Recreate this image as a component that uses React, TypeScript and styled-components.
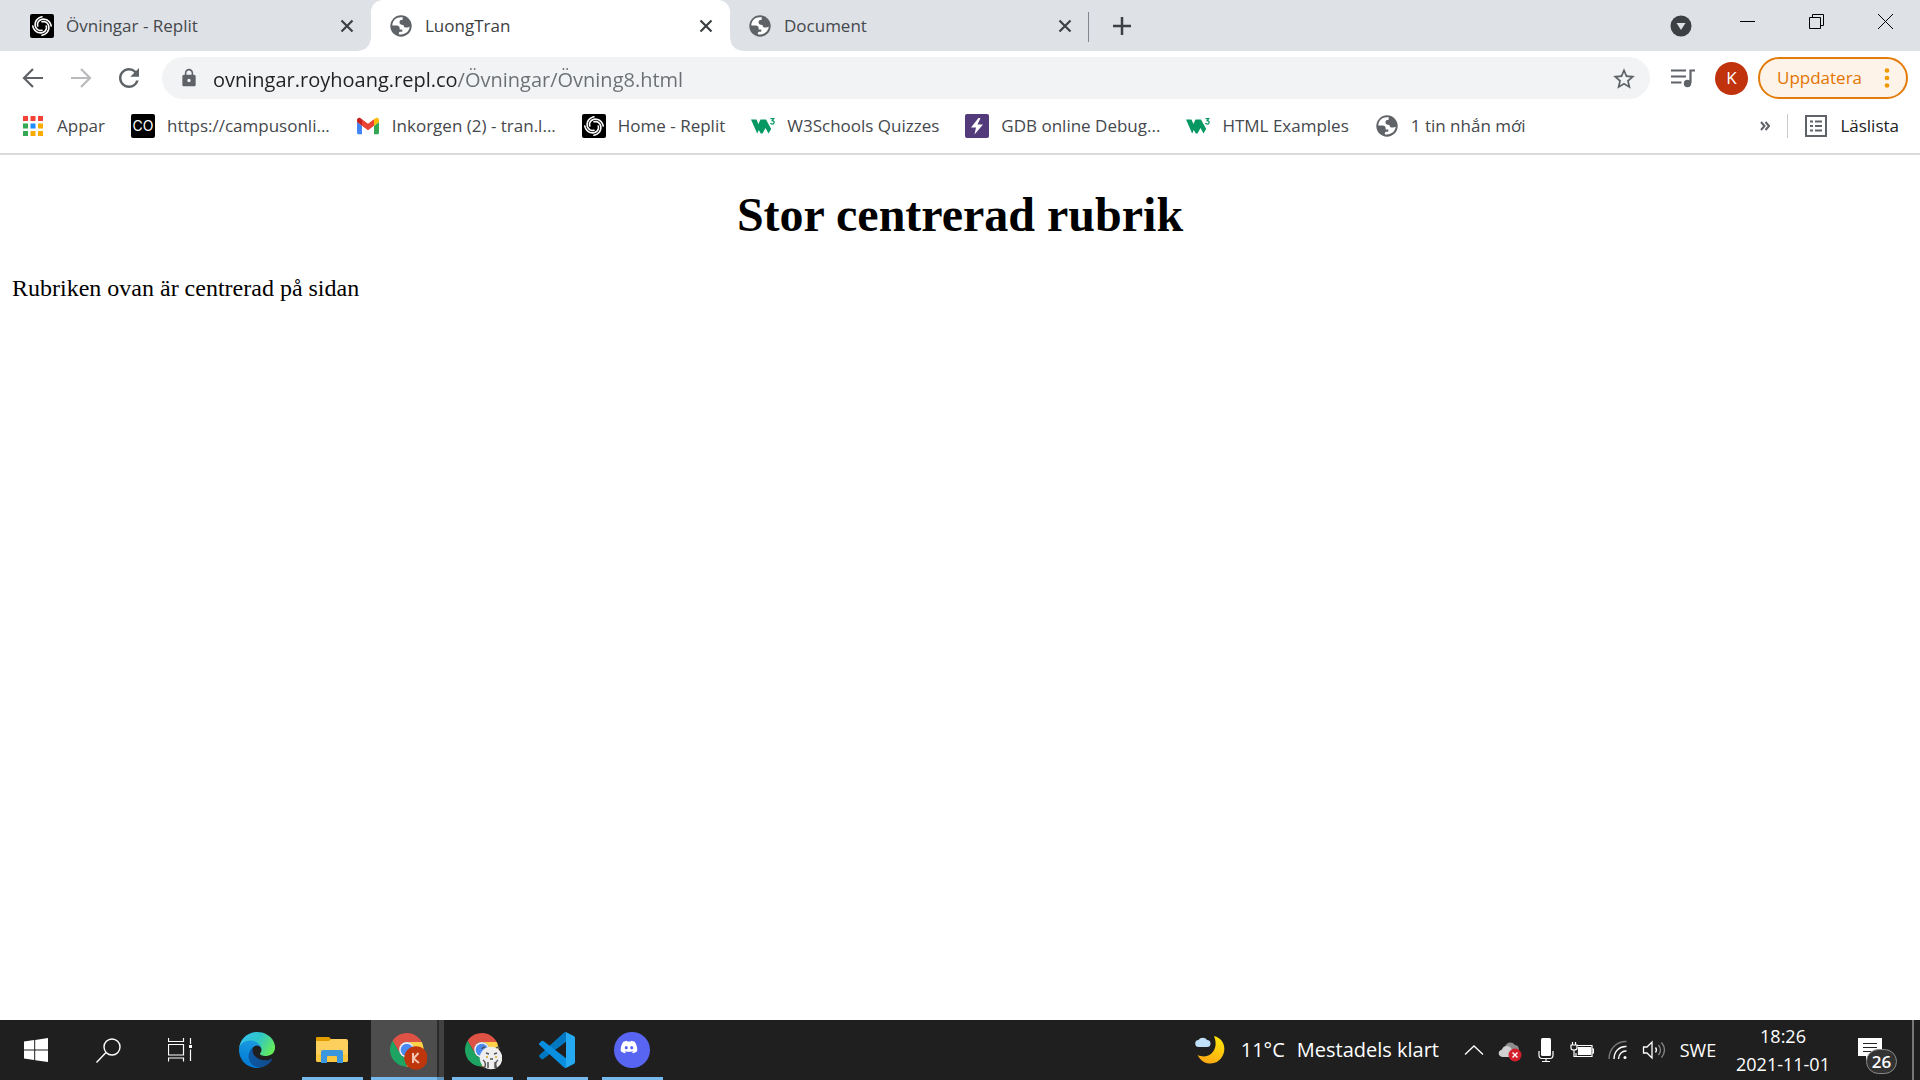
import React from "react";
import styled, { createGlobalStyle, css } from "styled-components";
import { FaDiscord } from "react-icons/fa";
import { MdLock, MdStarOutline, MdRefresh } from "react-icons/md";

const uiFont = `"Segoe UI", "Open Sans", "Noto Sans", sans-serif`;

const GlobalStyle = createGlobalStyle`
  *, *::before, *::after { box-sizing: border-box; }
  body { margin: 0; background: #fff; }
  button { margin: 0; padding: 0; border: 0; background: none; color: inherit; font: inherit; cursor: pointer; }
  svg { display: block; flex: none; }
`;

const Screen = styled.div`
  display: flex;
  flex-direction: column;
  min-height: 100vh;
  font-family: ${uiFont};
  font-size: 17px;
  line-height: 24px;
`;

/* ---------- Tab strip ---------- */

const TabStrip = styled.div`
  display: flex;
  align-items: flex-start;
  height: 51px;
  padding-left: 12px;
  background: #dee1e6;
`;

const TabList = styled.div`
  display: flex;
  flex: 0 1 1077px;
  min-width: 0;
`;

const Tab = styled.div<{ $active?: boolean; $divided?: boolean }>`
  position: relative;
  display: flex;
  flex: 1 1 0;
  align-items: center;
  gap: 12px;
  min-width: 0;
  height: 51px;
  padding: 0 12px 0 18px;
  color: #45484c;
  ${(p) =>
    p.$active &&
    css`
      background: #fff;
      border-radius: 12px 12px 0 0;
      color: #3c4043;
      &::before,
      &::after {
        content: "";
        position: absolute;
        bottom: 0;
        width: 12px;
        height: 12px;
      }
      &::before {
        right: 100%;
        background: radial-gradient(circle at 0 0, transparent 11px, #fff 12px);
      }
      &::after {
        left: 100%;
        background: radial-gradient(circle at 100% 0, transparent 11px, #fff 12px);
      }
    `}
  ${(p) =>
    p.$divided &&
    css`
      &::after {
        content: "";
        position: absolute;
        right: 0;
        top: 12px;
        width: 1px;
        height: 30px;
        background: #80868b;
      }
    `}
`;

const TabTitle = styled.span`
  flex: 1;
  min-width: 0;
  overflow: hidden;
  white-space: nowrap;
`;

const SquareButton = styled.button`
  display: grid;
  place-items: center;
  flex: none;
  width: 24px;
  height: 24px;
  color: #3c4043;
`;

const NewTabButton = styled(SquareButton)`
  width: 66px;
  height: 51px;
`;

const TabSearchButton = styled(SquareButton)`
  height: 51px;
  margin: 0 20px 0 auto;
`;

const WindowButton = styled(SquareButton)`
  width: 69px;
  height: 43px;
  color: #000;
`;

/* ---------- Toolbar ---------- */

const Toolbar = styled.div`
  display: flex;
  align-items: center;
  height: 54px;
  padding: 0 12px 0 9px;
`;

const NavButton = styled(SquareButton)<{ $off?: boolean }>`
  width: 48px;
  height: 42px;
  color: ${(p) => (p.$off ? "#bababd" : "#5f6368")};
`;

const Omnibox = styled.label`
  display: flex;
  flex: 1;
  align-items: center;
  min-width: 0;
  height: 42px;
  margin: 0 9px;
  padding: 0 15px 0 17px;
  border-radius: 21px;
  background: #f1f3f4;
  color: #5f6368;
`;

/* The host is darker than the path that follows it. */
const UrlInput = styled.input`
  flex: 1;
  min-width: 0;
  height: 32px;
  margin-left: 14px;
  padding: 2px 0 0;
  border: 0;
  outline: 0;
  font-family: ${uiFont};
  font-size: 20px;
  line-height: 30px;
  color: #202124;
  background: linear-gradient(90deg, #202124 244px, #6b6f73 244px);
  background-clip: text;
  -webkit-background-clip: text;
  -webkit-text-fill-color: transparent;
`;

const Avatar = styled.button`
  flex: none;
  width: 33px;
  height: 33px;
  margin: 0 10px 0 8px;
  border-radius: 50%;
  background: #c0330c;
  color: #fff;
  font-size: 17px;
  text-align: center;
`;

const UpdateButton = styled.button`
  display: flex;
  align-items: center;
  justify-content: space-between;
  flex: none;
  width: 150px;
  height: 42px;
  padding: 0 16px 0 17px;
  border: 2px solid #e37c0a;
  border-radius: 21px;
  background: #fdf3e9;
  color: #e37400;
`;

/* ---------- Bookmarks ---------- */

const BookmarksBar = styled.nav`
  display: flex;
  align-items: center;
  height: 50px;
  padding: 0 21px 6px 21px;
  border-bottom: 2px solid #dadadc;
  color: #45484c;
`;

const BookmarkList = styled.div`
  display: flex;
  flex: 1;
  gap: 26px;
  min-width: 0;
  overflow: hidden;
`;

const Bookmark = styled.a`
  display: flex;
  align-items: center;
  flex: none;
  gap: 12px;
  height: 30px;
  color: inherit;
  text-decoration: none;
  white-space: nowrap;
`;

const MoreButton = styled(SquareButton)`
  margin-right: 10px;
  color: #5f6368;
`;

const ReadingList = styled.button`
  display: flex;
  align-items: center;
  gap: 12px;
  height: 24px;
  padding-left: 16px;
  border-left: 1px solid #c8cacd;
  color: #202124;
`;

const IconTile = styled.span<{ $bg: string }>`
  display: grid;
  place-items: center;
  flex: none;
  width: 24px;
  height: 24px;
  border-radius: 2px;
  background: ${(p) => p.$bg};
  color: #fff;
  font-family: Inter, sans-serif;
  font-size: 14px;
`;

/* ---------- Web page ---------- */

const Page = styled.main`
  flex: 1;
  padding: 0 12px;
  font-family: "Times New Roman", "Liberation Serif", serif;
  color: #000;
`;

const Heading = styled.h1`
  margin: 32px 0;
  font-size: 48px;
  line-height: 56px;
  text-align: center;
`;

const Paragraph = styled.p`
  margin: 0;
  font-size: 24px;
  line-height: 26px;
`;

/* ---------- Taskbar ---------- */

const Taskbar = styled.footer`
  display: flex;
  height: 60px;
  background: #1f1f1f;
  color: #fff;
  font-size: 18px;
`;

const SystemButton = styled(SquareButton)`
  width: 72px;
  height: 60px;
  color: #fff;
`;

const Apps = styled.div`
  display: flex;
  margin: 0 auto 0 3px;
`;

const AppButton = styled.button<{ $state?: "running" | "active" }>`
  display: grid;
  place-items: center;
  width: 75px;
  height: 60px;
  ${(p) =>
    p.$state === "running" &&
    css`
      background: linear-gradient(#76b9ed, #76b9ed) 8px bottom / 61px 3px no-repeat;
    `}
  ${(p) =>
    p.$state === "active" &&
    css`
      background:
        linear-gradient(90deg, #76b9ed 66px, #5f93bc 66px) 2px bottom / 73px 3px no-repeat,
        linear-gradient(90deg, #4d4d4d 66px, #2b2b2b 66px, #2b2b2b 68px, #414141 68px) 2px 0 / 73px 60px no-repeat;
    `}
`;

const Weather = styled.button`
  display: flex;
  align-items: center;
  margin-right: 17px;
  font-size: 20px;
  white-space: nowrap;
`;

const Temperature = styled.span`
  margin: 0 12px 0 16px;
`;

const TrayButton = styled(SquareButton)<{ $width?: number }>`
  width: ${(p) => p.$width ?? 36}px;
  height: 60px;
  color: #fff;
`;

const Clock = styled(TrayButton)`
  display: block;
  line-height: 28px;
  text-align: center;
`;

const ClockLine = styled.time`
  display: block;
`;

const Notifications = styled(TrayButton)`
  position: relative;
`;

const Count = styled.span`
  position: absolute;
  left: 24px;
  top: 29px;
  width: 31px;
  height: 25px;
  border: 1px solid #8a8a8a;
  border-radius: 13px;
  background: #333;
  font-size: 17px;
  font-weight: 600;
  line-height: 23px;
`;

const ShowDesktop = styled.button`
  width: 8px;
  height: 60px;
  border-left: 2px solid #777;
`;

/* ---------- Drawings ---------- */

const Globe = () => (
  <svg width="24" height="24" viewBox="0 0 24 24" fill="none">
    <circle cx="12" cy="12" r="10.7" fill="#5f6368" />
    <path
      d="M14 3.600C8.500 2.200 3.400 6 3.300 11.600h4.400c1.800 0 3 1.200 3 2.800v1.200h2.600v2.200h-1.600c-1.300 0-1.900.6-1.900 1.500v1c5.600 1.200 10.700-2.600 10.900-7.700-.8.8-1.900 1-3.300 1-1.900 0-2.900-1.100-2.900-2.700-2.400.1-4-.7-4-2.600 0-1.800 1.200-2.400 3.100-2.500 0-1 .2-1.600.4-2.200z"
      fill="#fff"
    />
  </svg>
);

/* One arm of the swirl, from the hub out to the rim over half a turn. */
const swirlArm = (start: number) =>
  Array.from({ length: 19 }, (_, i) => {
    const t = i / 18;
    const angle = ((start + t * 180) * Math.PI) / 180;
    const r = 4.2 + t * 5;
    return `${i ? "L" : "M"}${(12 + r * Math.cos(angle)).toFixed(2)} ${(12 + r * Math.sin(angle)).toFixed(2)}`;
  }).join("");

const Replit = () => (
  <IconTile $bg="#000">
    <svg width="24" height="24" viewBox="0 0 24 24" fill="none" stroke="#fff" strokeWidth="1.600" strokeLinecap="round">
      {[0, 90, 180, 270].map((a) => (
        <path key={a} d={swirlArm(a)} />
      ))}
    </svg>
  </IconTile>
);

const W3 = () => (
  <svg width="24" height="24" viewBox="0 0 24 24">
    <path d="M0 5.500h5.500l1.900 4.500 2.100-4.500H15l5.200 9.500-2.700 4.500-3-5.500-3 5.500h-1.700l-2-3.600-1.600 3.600z" fill="#059862" />
    <path d="M19.500 4.600h3.300l-1.700 2.100c3 0 2.400 3.400.2 3.400-.9 0-1.600-.4-1.900-1" fill="none" stroke="#059862" strokeWidth="1.200" />
  </svg>
);

const Gmail = () => (
  <svg width="24" height="24" viewBox="48 38 96 74">
    <path fill="#4285f4" d="M58 108h14V74L52 59v43c0 3.320 2.690 6 6 6" />
    <path fill="#34a853" d="M120 108h14c3.320 0 6-2.690 6-6V59l-20 15" />
    <path fill="#fbbc04" d="M120 48v26l20-15v-8c0-7.420-8.470-11.650-14.400-7.200" />
    <path fill="#ea4335" d="M72 74V48l24 18 24-18v26L96 92" />
    <path fill="#c5221f" d="M52 51v8l20 15V48l-5.600-4.200c-5.940-4.450-14.400-.22-14.400 7.200" />
  </svg>
);

const AppsGrid = () => {
  const colors = ["#f44336", "#f44336", "#f44336", "#34a853", "#1a8cff", "#f9ab00", "#34a853", "#f9ab00", "#f9ab00"];
  return (
    <svg width="24" height="24" viewBox="0 0 24 24">
      {colors.map((c, i) => (
        <rect key={i} x={2 + (i % 3) * 7.5} y={2 + Math.floor(i / 3) * 7.5} width="5" height="5" fill={c} />
      ))}
    </svg>
  );
};

const Cross = () => (
  <svg width="14" height="14" viewBox="0 0 14 14" stroke="currentColor" strokeWidth="2.200">
    <path d="M1.500 1.500l11 11M12.500 1.500l-11 11" />
  </svg>
);

const Arrow = ({ flip }: { flip?: boolean }) => (
  <svg width="22" height="22" viewBox="0 0 22 22" fill="none" stroke="currentColor" strokeWidth="2.200">
    <path d={flip ? "M1 11h19M11 2l9 9-9 9" : "M21 11H2M11 2l-9 9 9 9"} />
  </svg>
);

const MediaList = () => (
  <svg width="24" height="20" viewBox="0 0 24 20" fill="none" stroke="currentColor" strokeWidth="2.200">
    <path d="M0 2.500h15M0 8.500h15M0 14.500h10.500" />
    <path d="M24 2.500h-4.500V15" />
    <circle cx="16.500" cy="15.500" r="3.700" fill="currentColor" stroke="none" />
  </svg>
);

const Chrome = ({ children }: { children: React.ReactNode }) => (
  <svg width="40" height="40" viewBox="0 0 40 40">
    <g transform="translate(3 3) scale(.7)">
      <path fill="#de5246" d="M3.810 11.030A24 24 0 0 1 45.330 13L24 13A11 11 0 0 0 14.470 29.500z" />
      <path fill="#fdd248" d="M45.330 13A24 24 0 0 1 22.860 47.970L33.530 29.500A11 11 0 0 0 24 13z" />
      <path fill="#1da462" d="M22.860 47.970A24 24 0 0 1 3.810 11.030L14.470 29.500A11 11 0 0 0 33.530 29.500z" />
      <circle cx="24" cy="24" r="11" fill="#f1f1f1" />
      <circle cx="24" cy="24" r="8.800" fill="#4a8af4" />
    </g>
    {children}
  </svg>
);

const Edge = () => (
  <svg width="36" height="36" viewBox="0 0 256 256">
    <defs>
      <linearGradient id="edgeDark" x1="0" x2="1">
        <stop offset="0" stopColor="#0c59a4" />
        <stop offset="1" stopColor="#114a8b" />
      </linearGradient>
      <linearGradient id="edgeMid" x1=".6" y1="0" x2=".3" y2="1">
        <stop offset="0" stopColor="#1b9de2" />
        <stop offset="1" stopColor="#0078d4" />
      </linearGradient>
      <linearGradient id="edgeTop" x1="0" y1=".2" x2="1" y2=".6">
        <stop offset="0" stopColor="#35c1f1" />
        <stop offset=".5" stopColor="#2fc6c9" />
        <stop offset="1" stopColor="#66eb5a" />
      </linearGradient>
    </defs>
    <path
      fill="url(#edgeDark)"
      d="M231.100 190.500c-3.400 1.800-6.900 3.400-10.500 4.700a101.700 101.700 0 0 1-35.900 6.500c-47.300 0-88.500-32.500-88.500-74.300.1-11.400 6.400-21.900 16.400-27.300-42.800 1.800-53.800 46.400-53.800 72.500 0 73.900 68.100 81.400 82.800 81.400 7.900 0 19.800-2.300 27-4.600l1.300-.4a128.300 128.300 0 0 0 66.600-52.800c1.200-1.900.6-4.300-1.200-5.500-1.300-.8-2.900-.9-4.200-.2z"
    />
    <path
      fill="url(#edgeMid)"
      d="M105.700 241.400c-8.900-5.500-16.600-12.800-22.700-21.300a81.400 81.400 0 0 1 29.500-120.100c3.100-1.500 8.500-4.100 15.600-4a32.400 32.400 0 0 1 25.700 13 31.900 31.900 0 0 1 6.300 18.700c0-.2 24.500-79.600-80-79.600-43.900 0-80 41.700-80 78.200-.2 19.300 4 38.500 12.100 56a128 128 0 0 0 156.400 67.100 75.500 75.500 0 0 1-62.800-8z"
    />
    <path
      fill="url(#edgeTop)"
      d="M152.300 148.900c-.9 1-3.400 2.500-3.400 5.600 0 2.600 1.700 5.200 4.800 7.300 14.400 10.100 41.700 8.700 41.800 8.700a59.600 59.600 0 0 0 30.300-8.300 61.400 61.400 0 0 0 30.400-52.900c.3-22.400-8-37.300-11.300-43.900C223.500 23.900 177.700 0 128 0 58 0 1 56.200 0 126.200c.5-36.500 36.800-66 80-66 3.500 0 23.500.3 42 10.100 16.300 8.600 24.900 18.900 30.800 29.200 6.200 10.700 7.300 24.100 7.300 29.500s-2.700 13.300-7.800 19.900z"
    />
  </svg>
);

const Folder = () => (
  <svg width="34" height="30" viewBox="0 0 34 30">
    <path d="M1 3q0-1 1-1h12l2 2-2 4H1z" fill="#e19c00" />
    <path d="M1 6h13l2-2h15q2 0 2 2v19q0 2-2 2H3q-2 0-2-2z" fill="#fdd05e" />
    <path d="M1 19h32v6q0 2-2 2H3q-2 0-2-2z" fill="#f9c840" />
    <path d="M6 28V17q0-2 2-2h18q2 0 2 2v11h-6v-6q0-1-1-1h-8q-1 0-1 1v6z" fill="#3a96dd" />
  </svg>
);

const VsCode = () => (
  <svg width="36" height="36" viewBox="0 0 100 100">
    <path fill="#0078c1" d="M75 27.300L12.190 74.990a4.160 4.160 0 0 1-5.320-.24l-5.500-5.010a4.170 4.170 0 0 1 0-6.160L68.760 2.100 75 1z" />
    <path fill="#0a8fe0" d="M75 72.700L12.190 25.010a4.160 4.160 0 0 0-5.320.24l-5.500 5.010a4.170 4.170 0 0 0 0 6.160l67.390 61.480L75 99z" />
    <path fill="#24a9f2" d="M75.860 99.100a6.220 6.220 0 0 1-7.100-1.200c2.300 2.300 6.240.7 6.240-2.600V4.700c0-3.300-3.940-4.900-6.240-2.600a6.230 6.230 0 0 1 7.100-1.220l20.600 9.920A6.250 6.250 0 0 1 100 16.420v67.160a6.250 6.250 0 0 1-3.540 5.620z" />
  </svg>
);

const Discord = () => (
  <svg width="36" height="36" viewBox="0 0 36 36">
    <circle cx="18" cy="18" r="18" fill="#5865f2" />
    <FaDiscord x="6" y="6" width="24" height="24" color="#fff" />
  </svg>
);

const Moon = () => (
  <svg width="30" height="30" viewBox="0 0 30 30">
    <defs>
      <linearGradient id="moon" x1=".8" y1="0" x2=".4" y2="1">
        <stop offset="0" stopColor="#ffe70a" />
        <stop offset="1" stopColor="#fba913" />
      </linearGradient>
    </defs>
    <path d="M19 1c8 2 11.500 9 10 16C27 25 21 29 14 28.500 9 28 5 25 2.500 20c7 3 13 1 16-4S21 6 19 1z" fill="url(#moon)" />
    <path d="M4 12a3.500 3.500 0 0 1-.5-7A5 5 0 0 1 12 5a3.500 3.500 0 0 1 0 7z" fill="#bfe0f8" />
  </svg>
);

const Strokes = ({ d, w = 24, h = 24, sw = 1.5 }: { d: string; w?: number; h?: number; sw?: number }) => (
  <svg width={w} height={h} viewBox={`0 0 ${w} ${h}`} fill="none" stroke="currentColor" strokeWidth={sw}>
    <path d={d} />
  </svg>
);

/* ---------- Content ---------- */

const bookmarks: { icon: React.ReactNode; label: string }[] = [
  { icon: <AppsGrid />, label: "Appar" },
  { icon: <IconTile $bg="#000" aria-hidden>CO</IconTile>, label: "https://campusonli..." },
  { icon: <Gmail />, label: "Inkorgen (2) - tran.l..." },
  { icon: <Replit />, label: "Home - Replit" },
  { icon: <W3 />, label: "W3Schools Quizzes" },
  {
    icon: (
      <IconTile $bg="#533a7b">
        <svg width="24" height="24" viewBox="0 0 24 24" fill="#fff">
          <path d="M13.500 4L6 13.500h5L9.500 20.500 18 10.500h-5.500L15.500 4z" />
        </svg>
      </IconTile>
    ),
    label: "GDB online Debug...",
  },
  { icon: <W3 />, label: "HTML Examples" },
  { icon: <Globe />, label: "1 tin nhắn mới" },
];

const tabs = [
  { icon: <Replit />, title: "Övningar - Replit" },
  { icon: <Globe />, title: "LuongTran", active: true },
  { icon: <Globe />, title: "Document", divided: true },
];

export default function App() {
  return (
    <Screen>
      <GlobalStyle />
      <TabStrip>
        <TabList>
          {tabs.map((t) => (
            <Tab key={t.title} $active={t.active} $divided={t.divided}>
              {t.icon}
              <TabTitle>{t.title}</TabTitle>
              <SquareButton aria-label="Stäng flik">
                <Cross />
              </SquareButton>
            </Tab>
          ))}
        </TabList>
        <NewTabButton aria-label="Ny flik">
          <Strokes w={18} h={18} sw={2.5} d="M9 0v18M0 9h18" />
        </NewTabButton>
        <TabSearchButton aria-label="Sök bland flikar">
          <svg width="22" height="22" viewBox="0 0 22 22">
            <circle cx="11" cy="11" r="10.500" fill="#3c4043" />
            <path d="M6.500 8h9L11 15z" fill="#dee1e6" />
          </svg>
        </TabSearchButton>
        <WindowButton aria-label="Minimera">
          <Strokes w={15} h={15} sw={1} d="M0 7.500h15" />
        </WindowButton>
        <WindowButton aria-label="Återställ">
          <Strokes w={15} h={15} sw={1} d="M.5 3.500h11v11H.5zM3.500 3.500v-3h11v11h-3" />
        </WindowButton>
        <WindowButton aria-label="Stäng">
          <Strokes w={15} h={15} sw={1} d="M0 0l15 15M15 0L0 15" />
        </WindowButton>
      </TabStrip>

      <Toolbar>
        <NavButton aria-label="Tillbaka">
          <Arrow />
        </NavButton>
        <NavButton aria-label="Framåt" $off>
          <Arrow flip />
        </NavButton>
        <NavButton aria-label="Läs in igen">
          <MdRefresh size={30} />
        </NavButton>
        <Omnibox>
          <MdLock size={20} />
          <UrlInput aria-label="Adress" defaultValue="ovningar.royhoang.repl.co/Övningar/Övning8.html" />
          <SquareButton aria-label="Bokmärk">
            <MdStarOutline size={26} color="#5f6368" />
          </SquareButton>
        </Omnibox>
        <NavButton aria-label="Media">
          <MediaList />
        </NavButton>
        <Avatar aria-label="K">K</Avatar>
        <UpdateButton>
          Uppdatera
          <svg width="6" height="20" viewBox="0 0 6 20" fill="#f29900">
            <circle cx="3" cy="2.500" r="2.300" />
            <circle cx="3" cy="10" r="2.300" />
            <circle cx="3" cy="17.500" r="2.300" />
          </svg>
        </UpdateButton>
      </Toolbar>

      <BookmarksBar>
        <BookmarkList>
          {bookmarks.map((b) => (
            <Bookmark key={b.label} href="#">
              {b.icon}
              {b.label}
            </Bookmark>
          ))}
        </BookmarkList>
        <MoreButton aria-label="Fler bokmärken">
          <Strokes w={10} h={10} sw={2} d="M1 1l3.500 4L1 9M5.500 1L9 5 5.500 9" />
        </MoreButton>
        <ReadingList>
          <svg width="24" height="24" viewBox="0 0 24 24" fill="none" stroke="#5f6368" strokeWidth="2">
            <path d="M2 2h20v20H2z" />
            <path d="M6 7.500h3M6 12h3M6 16.500h3M11 7.500h7M11 12h7M11 16.500h7" />
          </svg>
          Läslista
        </ReadingList>
      </BookmarksBar>

      <Page>
        <Heading>Stor centrerad rubrik</Heading>
        <Paragraph>Rubriken ovan är centrerad på sidan</Paragraph>
      </Page>

      <Taskbar>
        <SystemButton aria-label="Start">
          <svg width="24" height="24" viewBox="0 0 24 24" fill="#fff">
            <path d="M0 3.500l10.200-1.400v9.400H0zM11.200 1.900L24 0v11.500H11.200zM0 12.500h10.200v9.400L0 20.500zM11.200 12.500H24V24l-12.800-1.800z" />
          </svg>
        </SystemButton>
        <SystemButton aria-label="Sök">
          <svg width="25" height="25" viewBox="0 0 25 25" fill="none" stroke="#fff" strokeWidth="1.400">
            <circle cx="16" cy="9" r="8" />
            <path d="M10 14.500L.5 24.500" />
          </svg>
        </SystemButton>
        <SystemButton aria-label="Aktivitetsvy">
          <svg width="24" height="24" viewBox="0 0 24 24" fill="none" stroke="#fff" strokeWidth="1.200">
            <path d="M.5 0v3.500h15V0M.5 6.500h15v10.500H.5zM.5 23.500V20h15v3.500M22.500 0v6M22.500 11.500V23" />
            <path d="M21 7h3v3h-3z" fill="#fff" stroke="none" />
          </svg>
        </SystemButton>
        <Apps>
          <AppButton aria-label="Edge">
            <Edge />
          </AppButton>
          <AppButton aria-label="Utforskaren" $state="running">
            <Folder />
          </AppButton>
          <AppButton aria-label="Chrome" $state="active">
            <Chrome>
              <circle cx="29" cy="28" r="11.700" fill="#bf360c" />
              <path d="M26 23v10M31.500 23l-5 5.500 5.500 4.500" fill="none" stroke="#f3c4b4" strokeWidth="2" />
            </Chrome>
          </AppButton>
          <AppButton aria-label="Chrome 2" $state="running">
            <Chrome>
              <circle cx="29" cy="28" r="11.300" fill="#eee" />
              <path
                d="M20 19q1-3 3-1M37 19q0-3-3-1M24 23l3 1M32 24l3-1M28 29h3M21 30c3 2 3 6 1 8M36 30c-3 2-3 6-1 8M26 32v6M33 32v6"
                fill="none"
                stroke="#555"
                strokeWidth="1.500"
              />
              <circle cx="25" cy="27" r="1" fill="#d9a520" />
              <circle cx="34" cy="27" r="1" fill="#d9a520" />
            </Chrome>
          </AppButton>
          <AppButton aria-label="Visual Studio Code" $state="running">
            <VsCode />
          </AppButton>
          <AppButton aria-label="Discord" $state="running">
            <Discord />
          </AppButton>
        </Apps>
        <Weather>
          <Moon />
          <Temperature>11°C</Temperature>
          Mestadels klart
        </Weather>
        <TrayButton aria-label="Visa dolda ikoner">
          <Strokes w={20} h={10} sw={1.3} d="M1 9.500l9-8.500 9 8.500" />
        </TrayButton>
        <TrayButton aria-label="OneDrive">
          <svg width="26" height="24" viewBox="0 0 26 24">
            <path d="M8 9c1-5 7-6 10-2 3 0 4 3 4 5l-9 3z" fill="#8d8d8d" />
            <path d="M6 19c-5 0-6-6-1-7.500C6 7 12 7 14 10l4 9z" fill="#d0d0d0" />
            <circle cx="18" cy="17" r="6.500" fill="#d4202c" />
            <path d="M15.500 14.500l5 5M20.500 14.500l-5 5" stroke="#fff" strokeWidth="1.400" />
          </svg>
        </TrayButton>
        <TrayButton aria-label="Mikrofon">
          <svg width="16" height="24" viewBox="0 0 16 24" fill="none" stroke="#fff" strokeWidth="1.200">
            <rect x="3" y="0" width="10" height="18" rx="1.500" fill="#fff" stroke="none" />
            <path d="M1 13v4q0 3.500 3 3.500h8q3 0 3-3.500v-4M8 20v3.500M4 23.500h8" />
          </svg>
        </TrayButton>
        <TrayButton aria-label="Batteri">
          <svg width="24" height="18" viewBox="0 0 24 18" fill="none" stroke="#fff" strokeWidth="1.200">
            <path d="M7 4.500h15v11H6V12M22.500 8h1v4h-1" />
            <path d="M8.500 6.500h12v7h-12z" fill="#fff" />
            <path d="M1 4h6v3q0 2-3 2t-3-2zM2.500 4V1M5.500 4V1M4 9v6.500h2" />
          </svg>
        </TrayButton>
        <TrayButton aria-label="Nätverk">
          <svg width="20" height="20" viewBox="0 0 20 20" fill="none" stroke="#fff" strokeWidth="1.400">
            <path d="M1 19C1 9 9 1 18.500 1.500" stroke="#777" />
            <path d="M6 19C6 11 12 6 18.500 6.500M10.500 19c0-5 4-8.500 8-8" />
            <circle cx="17" cy="17.500" r="1.500" fill="#fff" stroke="none" />
          </svg>
        </TrayButton>
        <TrayButton aria-label="Volym">
          <svg width="24" height="20" viewBox="0 0 24 20" fill="none" stroke="#fff" strokeWidth="1.300">
            <path d="M1.500 7v6h3.500l5 5V2L5 7zM13.500 7.500q2 2.500 0 5" />
            <path d="M16.500 5q4 5 0 10M19.500 2.500q6 7.500 0 15" stroke="#888" />
          </svg>
        </TrayButton>
        <TrayButton $width={52}>SWE</TrayButton>
        <Clock $width={118}>
          <ClockLine>18:26</ClockLine>
          <ClockLine>2021-11-01</ClockLine>
        </Clock>
        <Notifications $width={70} aria-label="26 aviseringar">
          <svg width="38" height="28" viewBox="0 0 38 28">
            <path d="M0 2h24v18H12l-4 5v-5H0z" fill="#fff" />
            <path d="M5 7.500h14M5 11.500h14M5 15.500h8" stroke="#222" strokeWidth="1.200" />
          </svg>
          <Count>26</Count>
        </Notifications>
        <ShowDesktop aria-label="Visa skrivbordet" />
      </Taskbar>
    </Screen>
  );
}
